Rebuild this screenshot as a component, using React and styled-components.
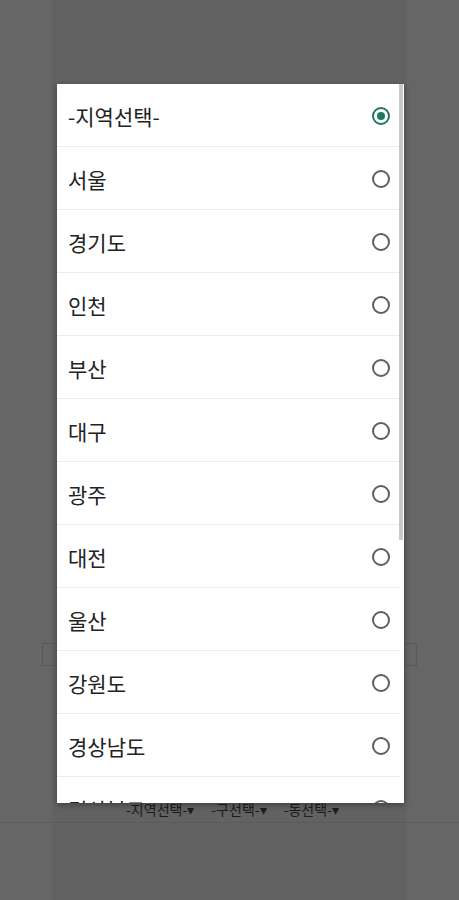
import React from "react";
import styled, { createGlobalStyle } from "styled-components";

const regions = [
    "-지역선택-",
    "서울",
    "경기도",
    "인천",
    "부산",
    "대구",
    "광주",
    "대전",
    "울산",
    "강원도",
    "경상남도",
    "경상북도",
];

const GlobalStyle = createGlobalStyle`
    html, body {
        margin: 0;
        padding: 0;
        background: #666666;
        font-family: "Noto Sans CJK KR", "Noto Sans", sans-serif;
    }
`;

const Page = styled.div`
    position: relative;
    width: 459px;
    height: 900px;
    overflow: hidden;
    background: #666666;
    display: flex;
    justify-content: center;
`;

const Column = styled.div`
    width: 355px;
    background: #626262;
    display: flex;
    flex-direction: column;
    padding-top: 643px;
`;

const InputBox = styled.div`
    height: 21px;
    margin: 0 -10px;
    border: 1px solid #595959;
`;

const Selects = styled.div`
    display: flex;
    justify-content: center;
    gap: 17px;
    margin-top: 133px;
    padding-left: 6px;
    font-size: 14px;
    line-height: 20px;
    color: #1c1c1c;
`;

const Divider = styled.div`
    height: 1px;
    margin: 3px -60px 0;
    background: #5b5b5b;
`;

const Dialog = styled.div`
    position: absolute;
    top: 84px;
    left: 57px;
    width: 347px;
    height: 719px;
    background: #ffffff;
    overflow: hidden;
    box-shadow: 0 2px 6px rgba(0, 0, 0, 0.35);
`;

const Scrollbar = styled.div`
    position: absolute;
    top: 0;
    right: 1px;
    width: 4px;
    height: 456px;
    background: #c8c8c8;
`;

const Row = styled.div`
    box-sizing: border-box;
    height: 63px;
    display: flex;
    align-items: center;
    justify-content: space-between;
    padding: 1px 10px 0 11px;
    border-bottom: 1px solid #ececec;
    margin-right: 4px;
    font-size: 21px;
    color: #222222;
`;

const Radio = styled.span`
    width: 18px;
    height: 18px;
    box-sizing: border-box;
    border-radius: 50%;
    border: 2px solid ${(p) => (p.checked ? "#1d7a61" : "#5e5e5e")};
    display: flex;
    align-items: center;
    justify-content: center;

    &::after {
        content: "";
        width: 8px;
        height: 8px;
        border-radius: 50%;
        background: ${(p) => (p.checked ? "#1d7a61" : "transparent")};
    }
`;

const App = () => {
    return (
        <Page>
            <GlobalStyle />
            <Column>
                <InputBox />
                <Selects>
                    <span>-지역선택-▾</span>
                    <span>-구선택-▾</span>
                    <span>-동선택-▾</span>
                </Selects>
                <Divider />
            </Column>
            <Dialog>
                {regions.map((name, i) => (
                    <Row key={name}>
                        <span>{name}</span>
                        <Radio checked={i === 0} />
                    </Row>
                ))}
                <Scrollbar />
            </Dialog>
        </Page>
    );
};

export default App;
